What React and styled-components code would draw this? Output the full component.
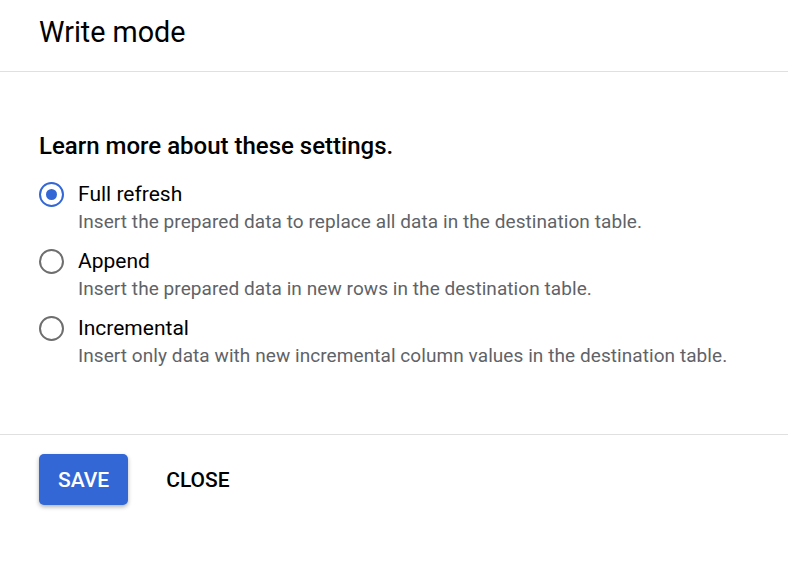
import React from 'react'
import styled, { createGlobalStyle } from 'styled-components'

const GlobalStyle = createGlobalStyle`
    body {
        margin: 0;
        background: #ffffff;
        font-family: Roboto, "Liberation Sans", sans-serif;
        color: #000000;
    }
`

const Dialog = styled.div`
    width: 788px;
    height: 568px;
    background: #ffffff;
`

const Header = styled.div`
    padding: 16px 39px 23px;
    font-size: 28.7px;
    line-height: 32px;
    border-bottom: 1px solid #e0e0e0;
`

const Body = styled.div`
    padding: 60px 39px 67px;
    border-bottom: 1px solid #e0e0e0;
`

const Heading = styled.div`
    font-size: 24px;
    line-height: 28px;
    font-weight: 500;
    margin-bottom: 21px;
`

const Options = styled.div`
    display: flex;
    flex-direction: column;
    gap: 15px;
`

const Option = styled.label`
    display: grid;
    grid-template-columns: 25px 1fr;
    column-gap: 14px;
    row-gap: 4px;
    cursor: pointer;
`

const Radio = styled.span`
    box-sizing: border-box;
    width: 25px;
    height: 25px;
    border-radius: 50%;
    border: 2.5px solid ${p => (p.checked ? '#3367d6' : '#6e6e6e')};
    display: flex;
    align-items: center;
    justify-content: center;
    align-self: center;

    &::after {
        content: '';
        width: 11px;
        height: 11px;
        border-radius: 50%;
        background: #3367d6;
        display: ${p => (p.checked ? 'block' : 'none')};
    }
`

const Label = styled.span`
    font-size: 21px;
    line-height: 26px;
`

const Description = styled.span`
    grid-column: 2;
    font-size: 19px;
    line-height: 22px;
    letter-spacing: 0.07px;
    color: #5f6368;
`

const Footer = styled.div`
    display: flex;
    align-items: center;
    gap: 19px;
    padding: 19px 39px;
`

const Button = styled.button`
    font-family: Roboto, "Liberation Sans", sans-serif;
    font-size: 21px;
    font-weight: 500;
    height: 51px;
    padding: 0 19px;
    border: none;
    border-radius: 5px;
    background: ${p => (p.primary ? '#3367d6' : 'transparent')};
    color: ${p => (p.primary ? '#ffffff' : '#000000')};
    box-shadow: ${p => (p.primary ? '0 2px 4px rgba(0, 0, 0, 0.3)' : 'none')};
    cursor: pointer;
`

const modes = [
    { name: 'Full refresh', text: 'Insert the prepared data to replace all data in the destination table.', checked: true },
    { name: 'Append', text: 'Insert the prepared data in new rows in the destination table.' },
    { name: 'Incremental', text: 'Insert only data with new incremental column values in the destination table.' },
]

function App() {
    return (
        <>
            <GlobalStyle />
            <Dialog>
                <Header>Write mode</Header>
                <Body>
                    <Heading>Learn more about these settings.</Heading>
                    <Options>
                        {modes.map(m => (
                            <Option key={m.name}>
                                <Radio checked={m.checked} />
                                <Label>{m.name}</Label>
                                <Description>{m.text}</Description>
                            </Option>
                        ))}
                    </Options>
                </Body>
                <Footer>
                    <Button primary>SAVE</Button>
                    <Button>CLOSE</Button>
                </Footer>
            </Dialog>
        </>
    )
}

export default App
